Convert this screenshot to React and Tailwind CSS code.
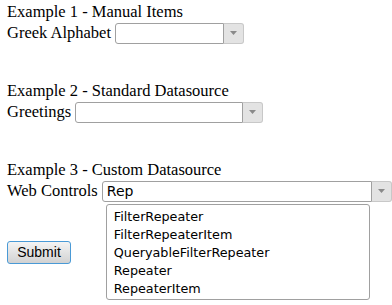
import React from 'react';

const items = ['FilterRepeater', 'FilterRepeaterItem', 'QueryableFilterRepeater', 'Repeater', 'RepeaterItem'];

function Combo({ width, value, children }) {
  return (
    <div className={`relative flex h-[21px] ${width}`}>
      <div className="flex-1 flex items-center border border-[#a0a0a0] rounded-l-[3px] bg-white pl-[4px] font-['DejaVu_Sans',sans-serif] text-[14px] text-black">
        {value}
      </div>
      <div className="w-[20px] flex items-center justify-center border border-l-0 border-[#c8c8c8] rounded-r-[3px] bg-[#e3e3e3]">
        <svg width="7" height="4" viewBox="0 0 7 4">
          <path d="M0 0 L7 0 L3.5 4 Z" fill="#8a8a8a" />
        </svg>
      </div>
      {children}
    </div>
  );
}

export default function App() {
  return (
    <div className="w-[392px] h-[305px] bg-white pl-[7px] pt-[2px] font-['Liberation_Serif',serif] text-[16.5px] text-black">
      <div className="h-[20px] leading-[20px]">Example 1 - Manual Items</div>
      <div className="flex items-center gap-[4px] h-[22px]">
        <span className="leading-[20px]">Greek Alphabet</span>
        <Combo width="w-[129px]" />
      </div>

      <div className="h-[20px] leading-[20px] mt-[37px]">Example 2 - Standard Datasource</div>
      <div className="flex items-center gap-[4px] h-[22px]">
        <span className="leading-[20px]">Greetings</span>
        <Combo width="w-[188px]" />
      </div>

      <div className="h-[20px] leading-[20px] mt-[37px]">Example 3 - Custom Datasource</div>
      <div className="flex items-center gap-[4px] h-[22px]">
        <span className="leading-[20px]">Web Controls</span>
        <Combo width="w-[290px]" value="Rep">
          <ul className="absolute left-[4px] top-full mt-[2px] w-[264px] border border-[#a0a0a0] rounded-[3px] bg-white pt-[3px] pb-[1px] font-['DejaVu_Sans',sans-serif] text-[12.75px] text-black">
            {items.map((it) => (
              <li key={it} className="pl-[7px] leading-[18px]">{it}</li>
            ))}
          </ul>
        </Combo>
      </div>

      <button className="mt-[39px] w-[64px] h-[23px] border border-[#4a9ad6] rounded-[3px] bg-gradient-to-b from-[#f4f4f4] to-[#d2d2d2] font-['Liberation_Sans',sans-serif] text-[14px] text-black">
        Submit
      </button>
    </div>
  );
}
